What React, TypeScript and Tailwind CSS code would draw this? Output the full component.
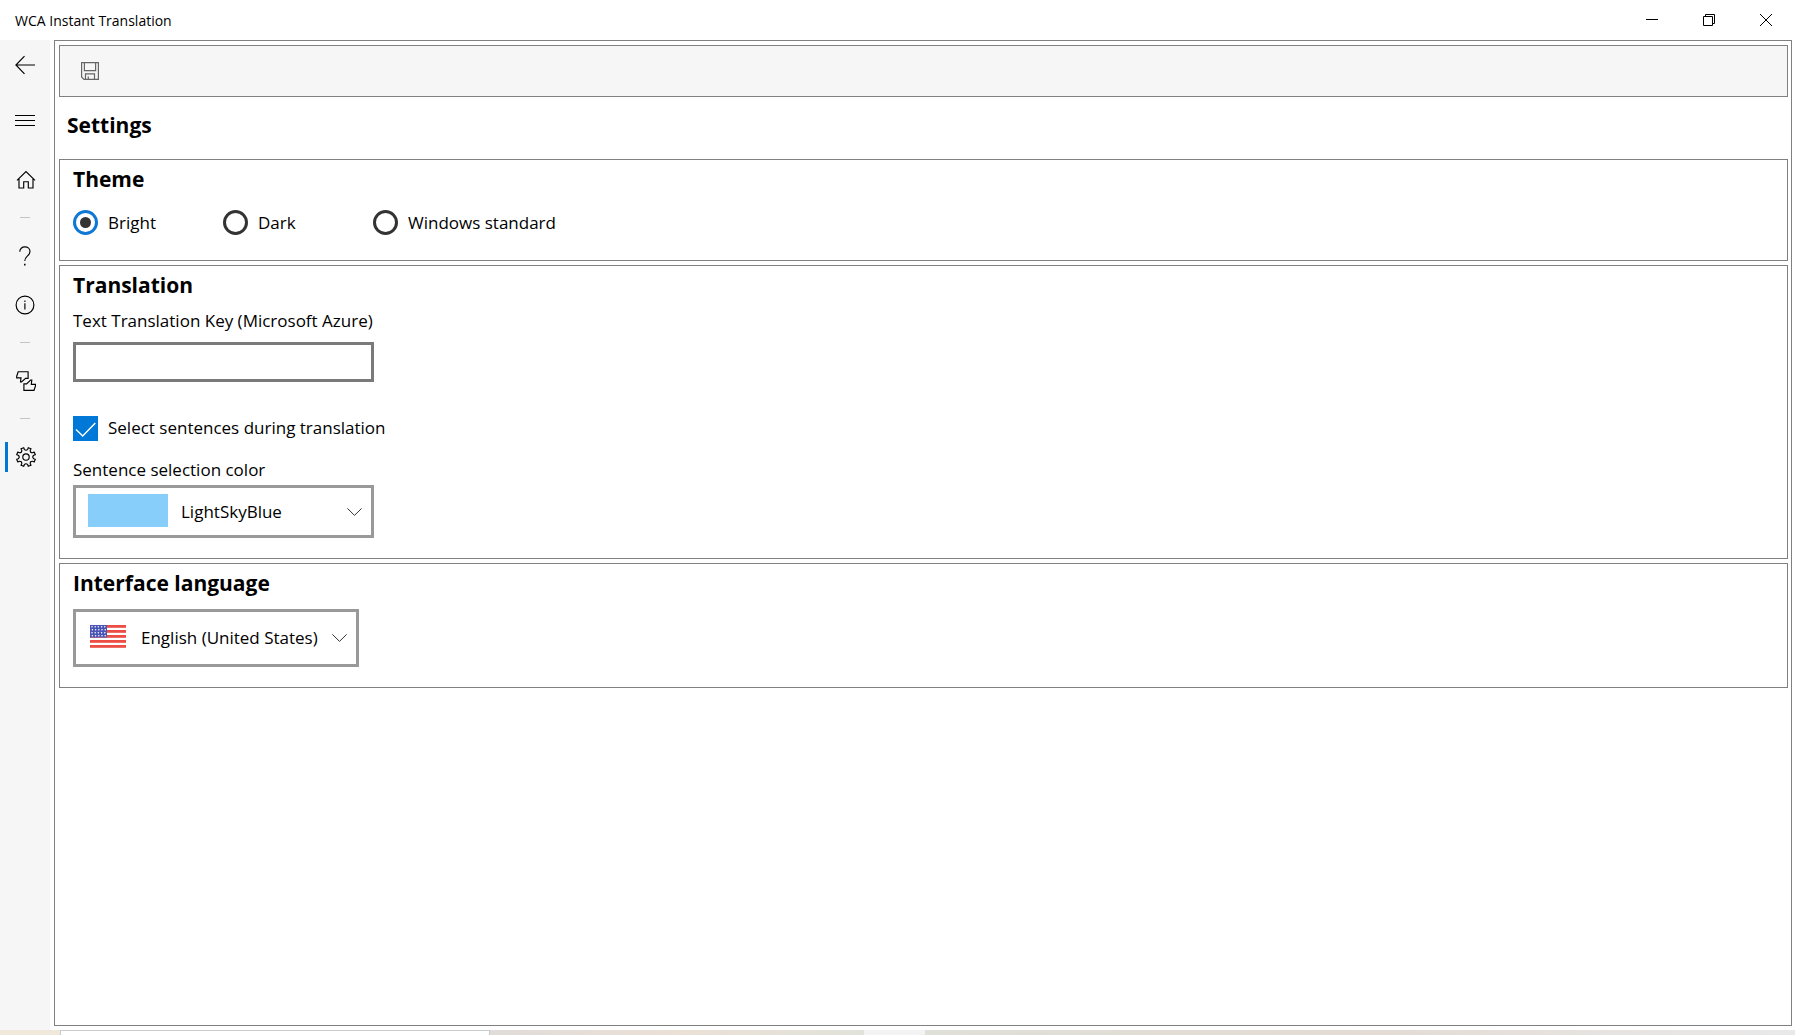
import { useState } from "react"
import type { ReactNode } from "react"

const gearPoint = (deg: number, r: number) => {
  const a = (deg * Math.PI) / 180
  return `${(10 + r * Math.sin(a)).toFixed(2)} ${(10 - r * Math.cos(a)).toFixed(2)}`
}

// eight teeth with rounded valleys between them
const gearPath =
  Array.from({ length: 8 }, (_, i) => {
    const a = 22.5 + i * 45
    return `${i === 0 ? "M" : "L"}${gearPoint(a - 9, 9.6)} L${gearPoint(a + 9, 9.6)} L${gearPoint(a + 10, 7.9)} Q${gearPoint(a + 22.5, 5.8)} ${gearPoint(a + 35, 7.9)}`
  }).join(" ") + "Z"

function Icon({ children }: { children: ReactNode }) {
  return (
    <svg viewBox="0 0 20 20" className="size-5 fill-none stroke-current" strokeWidth="1.15" aria-hidden="true">
      {children}
    </svg>
  )
}

function NavButton({ label, active, className, children }: { label: string; active?: boolean; className: string; children: ReactNode }) {
  return (
    <button type="button" aria-label={label} className={`relative flex w-full items-center justify-center hover:bg-black/5 ${className}`}>
      {active && <span className="absolute left-[5px] h-[30px] w-[3px] bg-[#0078d4]" />}
      {children}
    </button>
  )
}

function Separator() {
  return <div className="my-[13px] h-px w-2.5 bg-[#c4c4c4]" />
}

function Sidebar() {
  return (
    <nav className="flex w-[50px] shrink-0 flex-col items-center bg-[#f6f6f6]">
      <NavButton label="Back" className="h-[50px]">
        <Icon><path d="M20 10H1M9.5 1.2 .9 10l8.6 8.8" /></Icon>
      </NavButton>
      <NavButton label="Menu" className="mt-1 h-[52px]">
        <Icon><path d="M0 5.5h20M0 10.5h20M0 15.5h20" strokeWidth="1" /></Icon>
      </NavButton>
      <NavButton label="Home" className="mt-[9px] h-[49px] pl-0.5">
        <Icon><path d="M1 10.3 10 1.5l9 8.8M3 8.5V18h4.7v-6.3h4.6V18H17V8.5" /></Icon>
      </NavButton>
      <Separator />
      <NavButton label="Help" className="h-[49px]">
        <Icon>
          <path d="M4.8 5.7C4.8 2.8 7 .9 9.9 .9s5.1 1.9 5.1 4.7c0 4.4-5.2 4.2-5.2 9.3" />
          <path d="M9.8 17.7v1.7" strokeWidth="1.5" />
        </Icon>
      </NavButton>
      <NavButton label="Info" className="h-[49px]">
        <Icon>
          <circle cx="10" cy="10" r="8.9" />
          <path d="M9.9 8.3v6.2M9.9 5.4v1.6" />
        </Icon>
      </NavButton>
      <Separator />
      <NavButton label="Feedback" className="h-[49px] pl-0.5">
        <Icon>
          <path d="M2.2 .7h9.9v6.7H9.6L5.6 10.9H4.5l.5-4H.7V5.2Z" />
          <path d="M7.9 19.3v-6.4h2.7L14.6 9h1.2l-.5 4.3h4.2v1.6L18 19.3Z" />
        </Icon>
      </NavButton>
      <Separator />
      <NavButton label="Settings" active className="h-[49px] pl-0.5">
        <Icon>
          <path d={gearPath} strokeLinejoin="round" />
          <circle cx="10" cy="10" r="3.2" />
        </Icon>
      </NavButton>
    </nav>
  )
}

function TitleBar() {
  return (
    <header className="flex h-10 shrink-0 items-center justify-between bg-white pr-px pl-[15px]">
      <span className="pt-0.5 text-sm">WCA Instant Translation</span>
      <div className="flex h-full">
        <button type="button" aria-label="Minimize" className="flex w-[57px] items-center justify-center hover:bg-gray-100">
          <svg viewBox="0 0 12 12" className="size-3 fill-none stroke-black"><path d="M0 5.5h12" /></svg>
        </button>
        <button type="button" aria-label="Restore" className="flex w-[57px] items-center justify-center hover:bg-gray-100">
          <svg viewBox="0 0 12 12" className="size-3 fill-none stroke-black"><path d="M.5 2.5h9v9h-9ZM2.5 2V.5h9v9H10" /></svg>
        </button>
        <button type="button" aria-label="Close" className="flex w-[57px] items-center justify-center hover:bg-red-500">
          <svg viewBox="0 0 12 12" className="size-3 fill-none stroke-black"><path d="m0 0 12 12M12 0 0 12" /></svg>
        </button>
      </div>
    </header>
  )
}

function Chevron() {
  return (
    <svg viewBox="0 0 15 8" className="pointer-events-none absolute right-3 h-2 w-[15px] fill-none stroke-[#333]">
      <path d="m.4 .4 7.1 7 7.1-7" />
    </svg>
  )
}

function Flag() {
  return (
    <svg viewBox="0 0 36 23" className="pointer-events-none absolute left-[17px] mb-1 h-[23px] w-9">
      <rect width="36" height="23" fill="#fff" />
      {[0, 5, 10, 15, 20].map((y) => (
        <rect key={y} y={y} width="36" height="2.8" fill="#ec4d45" />
      ))}
      <rect width="17" height="12.5" fill="#4a55b5" />
      {[2, 5, 8, 11].map((y, row) =>
        [2, 5.2, 8.4, 11.6, 14.8].map((x) => (
          <circle key={`${x}-${y}`} cx={x + (row % 2 ? 0.4 : 0)} cy={y - 0.2} r="0.75" fill="#fff" />
        ))
      )}
    </svg>
  )
}

const themes = ["Bright", "Dark", "Windows standard"]

export default function App() {
  const [theme, setTheme] = useState("Bright")
  const [key, setKey] = useState("")
  const [selectSentences, setSelectSentences] = useState(true)

  return (
    <div className="flex h-screen flex-col bg-white font-['Open_Sans','Noto_Sans',sans-serif] text-black">
      <TitleBar />
      <div className="flex min-h-0 flex-1">
        <Sidebar />
        <main className="mr-[3px] mb-1 ml-1 flex flex-1 flex-col border border-[#808080] py-1 pr-[3px] pl-1">
          <div className="flex h-[52px] shrink-0 items-center border border-[#808080] bg-[#f6f6f6] px-5">
            <button type="button" aria-label="Save" className="text-[#666]">
              <svg viewBox="0 0 20 20" className="size-5 fill-none stroke-current" strokeWidth="1.2">
                <path d="M1.6 1.6h16.8v16.8H4L1.6 16ZM4.4 1.6v8h11.2v-8M5.5 18.4v-5.6h9v5.6M8.3 18.4v-3" />
              </svg>
            </button>
          </div>

          <h1 className="px-2 pt-3 pb-[18px] text-[21px] leading-8 font-bold">Settings</h1>

          <section className="h-[102px] border border-[#808080] px-[13px] pt-[3px]">
            <h2 className="text-[21px] leading-8 font-bold">Theme</h2>
            <div className="mt-2 flex">
              {themes.map((name) => (
                <label key={name} className="flex min-w-[150px] items-center gap-2.5 text-[17px] leading-9">
                  <input
                    type="radio"
                    name="theme"
                    checked={theme === name}
                    onChange={() => setTheme(name)}
                    className="flex size-[25px] appearance-none items-center justify-center rounded-full border-[3px] border-[#333] before:size-[11px] before:rounded-full checked:border-[#0f78d4] checked:before:bg-[#333]"
                  />
                  <span className="pt-0.5">{name}</span>
                </label>
              ))}
            </div>
          </section>

          <section className="mt-1 h-[294px] border border-[#808080] px-[13px] pt-[3px]">
            <h2 className="text-[21px] leading-8 font-bold">Translation</h2>
            <label htmlFor="translation-key" className="mt-1.5 block text-[17px] leading-7">Text Translation Key (Microsoft Azure)</label>
            <input
              id="translation-key"
              type="text"
              value={key}
              onChange={(e) => setKey(e.target.value)}
              className="mt-[7px] block h-10 w-[301px] border-[3px] border-[#7a7a7a] px-2 text-[17px] outline-none focus:border-[#0078d4]"
            />
            <label className="mt-[30px] flex w-fit items-center gap-2.5 text-[17px] leading-8">
              <span className="relative flex size-[25px]">
                <input
                  type="checkbox"
                  checked={selectSentences}
                  onChange={(e) => setSelectSentences(e.target.checked)}
                  className="peer size-[25px] appearance-none border-[3px] border-[#333] checked:border-0 checked:bg-[#0078d7]"
                />
                <svg viewBox="0 0 25 25" className="pointer-events-none absolute inset-0 hidden fill-none stroke-white peer-checked:block" strokeWidth="1.4">
                  <path d="m3 13.5 6.7 6.5L22.3 7" />
                </svg>
              </span>
              Select sentences during translation
            </label>
            <label htmlFor="selection-color" className="mt-3 block text-[17px] leading-7">Sentence selection color</label>
            <div className="relative mt-px flex h-[53px] w-[301px] items-center">
              <select id="selection-color" className="size-full appearance-none border-[3px] border-[#999] pl-[105px] text-[17px] outline-none">
                <option>LightSkyBlue</option>
              </select>
              <span className="pointer-events-none absolute left-[15px] mb-0.5 h-[33px] w-20 bg-[#87cefa]" />
              <Chevron />
            </div>
          </section>

          <section className="mt-1 h-[125px] border border-[#808080] px-[13px] pt-[3px]">
            <h2 className="text-[21px] leading-8 font-bold">
              <label htmlFor="language">Interface language</label>
            </h2>
            <div className="relative mt-2.5 flex h-[58px] w-[286px] items-center">
              <select id="language" className="size-full appearance-none border-[3px] border-[#999] pl-[65px] text-[17px] outline-none">
                <option>English (United States)</option>
              </select>
              <Flag />
              <Chevron />
            </div>
          </section>
        </main>
      </div>

      {/* desktop taskbar edge under the window */}
      <footer className="flex h-[5px] shrink-0">
        <div className="w-[60px] bg-[#f1e8dc]" />
        <div className="w-[430px] border-x border-t border-[#c8cccc] bg-white" />
        <div className="w-[374px] bg-linear-to-r from-[#e0dcd9] via-[#ebe0d6] to-[#e1e3da]" />
        <div className="w-[61px] bg-[#f3f3f3]" />
        <div className="flex-1 bg-linear-to-r from-[#dfe0d8] via-[#e3dbd4] to-[#e9e9e9]" />
      </footer>
    </div>
  )
}
